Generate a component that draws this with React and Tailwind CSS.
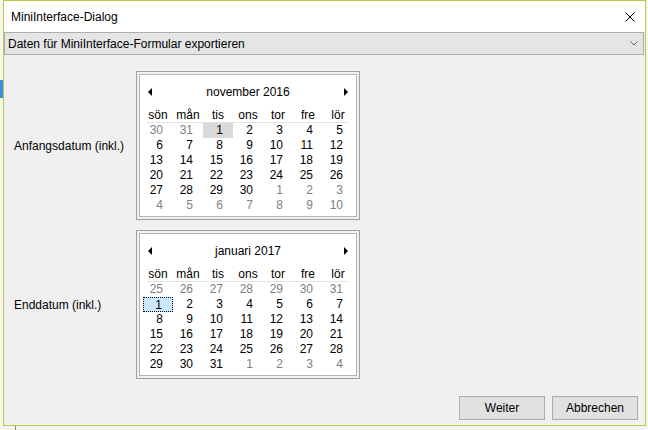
import React from 'react';

const dayNames = ['sön', 'mån', 'tis', 'ons', 'tor', 'fre', 'lör'];

const buildDays = (startPrev, prevLen, monthLen) => {
  const days = [];
  for (let d = startPrev; d <= prevLen; d++) days.push({ n: d, muted: true });
  for (let d = 1; d <= monthLen; d++) days.push({ n: d, muted: false });
  let next = 1;
  while (days.length < 42) days.push({ n: next++, muted: true });
  return days;
};

const Arrow = ({ dir }) => (
  <svg width="5" height="8" viewBox="0 0 5 8" className="block">
    {dir === 'left' ? <path d="M4 0 L0 4 L4 8 Z" fill="#000" /> : <path d="M1 0 L5 4 L1 8 Z" fill="#000" />}
  </svg>
);

const Calendar = ({ title, days, selected }) => (
  <div className="w-[224px] h-[149px] border border-[#a0a0a0] p-[2px] bg-[#f0f0f0]">
    <div className="h-full border border-[#b4b4b4] bg-white pt-[7px] px-[3px]">
      <div className="h-[20px] flex items-center justify-between px-[5px]">
        <Arrow dir="left" />
        <span className="text-black">{title}</span>
        <Arrow dir="right" />
      </div>
      <div className="mt-[6px] grid grid-cols-7 h-[14px] leading-[14px]">
        {dayNames.map((d) => (
          <div key={d} className="text-center text-black">{d}</div>
        ))}
      </div>
      <div className="mx-[4px] h-px bg-[#e3e3e3]" />
      <div className="grid grid-cols-7">
        {days.map((d, i) => {
          const isSel = !d.muted && d.n === 1;
          let cls = 'h-[15px] leading-[15px] text-right pr-[10px] ';
          if (isSel && selected === 'gray') cls += 'bg-[#d9d9d9] ';
          if (isSel && selected === 'focus') cls += 'bg-[#cce8ff] border border-dotted border-black leading-[13px] pr-[9px] ';
          cls += d.muted ? 'text-[#808080]' : 'text-black';
          return (
            <div key={i} className={cls}>{d.n}</div>
          );
        })}
      </div>
    </div>
  </div>
);

export default function App() {
  const nov = buildDays(30, 31, 30);
  const jan = buildDays(25, 31, 31);

  return (
    <div className="relative w-[648px] h-[430px] bg-[#f5f5f5] overflow-hidden font-['Liberation_Sans',Arial,sans-serif] text-[12px]">
      <div className="absolute left-0 top-[80px] w-[3px] h-[18px] bg-[#3a8ee6]" />
      <div className="absolute left-[15px] top-[420px] w-px h-[10px] bg-[#8a8a8a]" />

      <div className="absolute left-[3px] top-0 w-[643px] h-[426px] border border-[#c2c83e] bg-[#f0f0f0] flex flex-col">
        <div className="h-[31px] bg-white flex items-center justify-between pl-[7px] pr-[10px] shrink-0">
          <span className="text-black">MiniInterface-Dialog</span>
          <svg width="10" height="10" viewBox="0 0 10 10">
            <path d="M0.5 0.5 L9.5 9.5 M9.5 0.5 L0.5 9.5" stroke="#000" strokeWidth="1" />
          </svg>
        </div>
        <div className="h-[23px] mr-[1px] border border-[#adadad] bg-[#e5e5e5] flex items-center justify-between pl-[3px] pr-[5px] shrink-0">
          <span className="text-black">Daten für MiniInterface-Formular exportieren</span>
          <svg width="8" height="5" viewBox="0 0 8 5">
            <path d="M0.5 0.5 L4 4 L7.5 0.5" stroke="#606060" fill="none" strokeWidth="1" />
          </svg>
        </div>

        <div className="flex-1 flex flex-col">
          <div className="mt-[16px] grid grid-cols-[132px_224px] gap-y-[10px]">
            <div className="flex items-center pl-[10px] text-black">Anfangsdatum (inkl.)</div>
            <Calendar title="november 2016" days={nov} selected="gray" />
            <div className="flex items-center pl-[10px] text-black">Enddatum (inkl.)</div>
            <Calendar title="januari 2017" days={jan} selected="focus" />
          </div>
          <div className="mt-auto flex justify-end gap-[7px] pr-[7px] pb-[5px]">
            <button className="w-[86px] h-[24px] border border-[#adadad] bg-[#e1e1e1] text-black">Weiter</button>
            <button className="w-[86px] h-[24px] border border-[#adadad] bg-[#e1e1e1] text-black">Abbrechen</button>
          </div>
        </div>
      </div>
    </div>
  );
}
